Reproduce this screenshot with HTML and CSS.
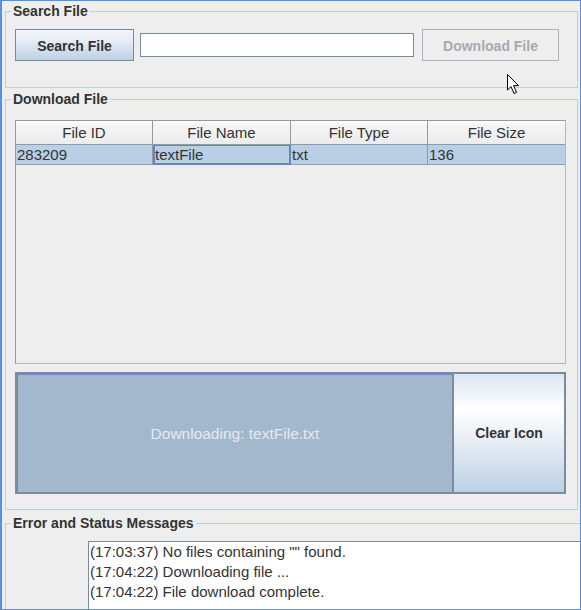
FILE: index.html
```html
<!DOCTYPE html>
<html>
<head>
<meta charset="utf-8">
<link rel="stylesheet" href="styles.css">
</head>
<body>
<div class="window">
  <div class="panel search-panel">
    <div class="panel-title">Search File</div>
    <div class="search-row">
      <div class="btn btn-search">Search File</div>
      <div class="field"></div>
      <div class="btn btn-disabled">Download File</div>
    </div>
  </div>

  <div class="panel download-panel">
    <div class="panel-title">Download File</div>
    <div class="pane">
      <div class="grid head">
        <div class="hcell">File ID</div>
        <div class="hcell">File Name</div>
        <div class="hcell">File Type</div>
        <div class="hcell last">File Size</div>
      </div>
      <div class="grid row">
        <div class="cell">283209</div>
        <div class="cell focus">textFile</div>
        <div class="cell">txt</div>
        <div class="cell last">136</div>
      </div>
    </div>
    <div class="progress">
      <div class="plabel">Downloading: textFile.txt</div>
      <div class="clear">Clear Icon</div>
    </div>
  </div>

  <div class="panel error-panel">
    <div class="panel-title">Error and Status Messages</div>
    <div class="messages">
      <div class="msg">(17:03:37) No files containing "" found.</div>
      <div class="msg">(17:04:22) Downloading file ...</div>
      <div class="msg">(17:04:22) File download complete.</div>
    </div>
  </div>

  <svg class="cursor" width="14" height="22" viewBox="0 0 14 22">
    <path d="M1.5 1.5 L1.5 17 L5 13.6 L8 20.5 L10.5 19.4 L7.6 12.6 L12.5 12.6 Z" fill="#fff" stroke="#000" stroke-width="1" stroke-linejoin="round"/>
  </svg>
</div>
</body>
</html>
```
FILE: styles.css
```css
html, body {
  margin: 0;
  padding: 0;
  background: #eeeeee;
}

.window {
  position: relative;
  width: 581px;
  height: 610px;
  box-sizing: border-box;
  overflow: hidden;
  background: #eeeeee;
  border-left: 2px solid #5b8fdc;
  border-top: 1px solid #5b8fdc;
  border-right: 1px solid #5b8fdc;
  border-bottom: 1px solid #5b8fdc;
  font-family: "Liberation Sans", Arial, sans-serif;
  color: #333333;
  display: flex;
  flex-direction: column;
  align-items: flex-start;
}

.panel {
  border: 1px solid #b8cfe5;
  margin-left: 3px;
  width: 573px;
  box-sizing: border-box;
  flex: none;
}

.panel-title {
  width: fit-content;
  margin: -9px 0 0 5px;
  padding: 0 2px;
  background: #eeeeee;
  font-size: 14px;
  font-weight: bold;
  line-height: 16px;
  height: 16px;
  color: #333333;
}

.search-panel {
  margin-top: 10px;
  height: 77px;
}

.search-row {
  display: flex;
  align-items: center;
  margin-top: 10px;
  padding-left: 9px;
}

.btn {
  height: 32px;
  box-sizing: border-box;
  display: flex;
  align-items: center;
  justify-content: center;
  font-size: 14px;
  font-weight: bold;
  padding-top: 1px;
}

.btn-search {
  width: 119px;
  border: 1px solid #7a8a99;
  background: linear-gradient(to bottom, #f3f6fa 0%, #e3ebf4 40%, #bcd0e4 100%);
  color: #333333;
}

.field {
  width: 274px;
  height: 24px;
  box-sizing: border-box;
  margin-left: 6px;
  border: 1px solid #7a8a99;
  background: #ffffff;
}

.btn-disabled {
  width: 137px;
  margin-left: 8px;
  border: 1px solid #aeb2b6;
  background: #eeeeee;
  color: #a5abb1;
}

.download-panel {
  margin-top: 11px;
  padding: 0 0 15px 0;
}

.pane {
  margin: 13px 0 0 9px;
  width: 551px;
  height: 244px;
  box-sizing: border-box;
  border: 1px solid #8f9aa5;
  border-right-color: #b0b8c0;
  border-bottom-color: #b0b8c0;
  background: #eeeeee;
}

.grid {
  display: grid;
  grid-template-columns: 137px 138px 137px 137px;
}

.hcell {
  height: 24px;
  box-sizing: border-box;
  border-right: 1px solid #8f9aa5;
  border-bottom: 1px solid #8f9aa5;
  background: linear-gradient(to bottom, #ffffff 0%, #f5f5f5 15%, #ececec 100%);
  font-size: 15px;
  line-height: 23px;
  text-align: center;
  color: #333333;
}

.hcell.last {
  border-right: none;
}

.cell {
  height: 20px;
  box-sizing: border-box;
  border-right: 1px solid #8f9aa5;
  border-bottom: 1px solid #8f9aa5;
  background: #b8cfe5;
  font-size: 15px;
  line-height: 19px;
  padding-left: 1px;
  color: #333333;
  white-space: nowrap;
}

.cell.last {
  border-right: none;
}

.cell.focus {
  border: 2px solid #6a85b5;
  border-top-width: 1px;
  line-height: 17px;
  padding-left: 0;
}

.progress {
  margin: 8px 0 0 9px;
  width: 551px;
  height: 122px;
  box-sizing: border-box;
  display: flex;
  border: 2px solid #7d8c9b;
}

.plabel {
  width: 437px;
  flex: none;
  box-sizing: border-box;
  background: #a3b8cc;
  border-top: 1px solid #6b8bc2;
  border-left: 1px solid #6b8bc2;
  border-right: 2px solid #7d8c9b;
  display: flex;
  align-items: center;
  justify-content: center;
  font-size: 15.5px;
  color: #e4eaf0;
}

.clear {
  flex: 1;
  display: flex;
  align-items: center;
  justify-content: center;
  font-size: 14px;
  font-weight: bold;
  color: #333333;
  background: linear-gradient(to bottom, #dbe5f1 0%, #ffffff 30%, #e3ebf4 60%, #bcd1e6 100%);
}

.error-panel {
  margin-top: 13px;
  height: 200px;
  width: 600px;
}

.messages {
  margin: 10px 0 0 82px;
  width: 520px;
  height: 120px;
  box-sizing: border-box;
  border-top: 1px solid #7a8a99;
  border-left: 1px solid #7a8a99;
  background: #ffffff;
  padding-left: 1px;
}

.msg {
  font-size: 15px;
  line-height: 20px;
  color: #333333;
  white-space: nowrap;
}

.cursor {
  position: absolute;
  left: 504px;
  top: 72px;
}
```
